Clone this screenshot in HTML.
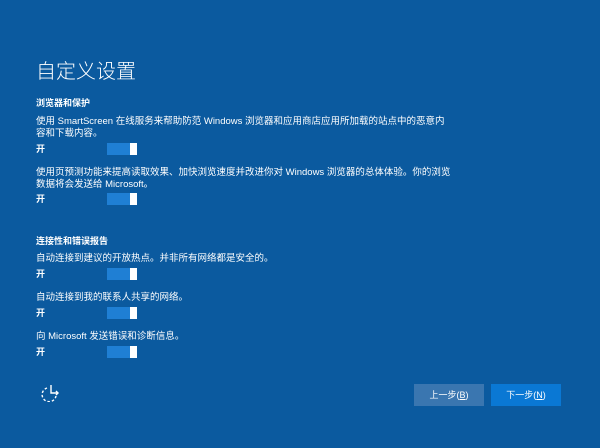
<!DOCTYPE html>
<html><head><meta charset="utf-8"><style>
body{margin:0;width:600px;height:448px;background:#0b5a9f;font-family:"Liberation Sans","Noto Sans CJK SC",sans-serif;color:#fff;position:relative;overflow:hidden}
.a{position:absolute;left:36px;font-size:9.5px;white-space:nowrap;line-height:12px}
.h{font-weight:bold;font-size:9px}
.t{position:absolute;left:107px;width:30px;height:12px;background:#1f7fd4}
.t:after{content:"";position:absolute;right:0;top:0;width:7px;height:12px;background:#fff}
.k{font-weight:bold;font-size:9px}
.b{position:absolute;top:384px;width:70px;height:22px;font-size:9px;text-align:center;line-height:22px}
</style></head><body>
<div class="a" style="top:59px;font-size:20px;line-height:26px;font-weight:300">自定义设置</div>
<div class="a h" style="top:97px">浏览器和保护</div>
<div class="a" style="top:116px">使用 SmartScreen 在线服务来帮助防范 Windows 浏览器和应用商店应用所加载的站点中的恶意内<br>容和下载内容。</div>
<div class="a k" style="top:143px">开</div><div class="t" style="top:143px"></div>
<div class="a" style="top:167px">使用页预测功能来提高读取效果、加快浏览速度并改进你对 Windows 浏览器的总体体验。你的浏览<br>数据将会发送给 Microsoft。</div>
<div class="a k" style="top:193px">开</div><div class="t" style="top:193px"></div>
<div class="a h" style="top:235px">连接性和错误报告</div>
<div class="a" style="top:253px">自动连接到建议的开放热点。并非所有网络都是安全的。</div>
<div class="a k" style="top:268px">开</div><div class="t" style="top:268px"></div>
<div class="a" style="top:292px">自动连接到我的联系人共享的网络。</div>
<div class="a k" style="top:307px">开</div><div class="t" style="top:307px"></div>
<div class="a" style="top:331px">向 Microsoft 发送错误和诊断信息。</div>
<div class="a k" style="top:346px">开</div><div class="t" style="top:346px"></div>
<svg style="position:absolute;left:41px;top:384px" width="22" height="18" viewBox="0 0 22 18" fill="none" stroke="#fff" stroke-width="1.4">
<path d="M6 4 A7 7 0 1 0 15 12" stroke-dasharray="2.5 2"/><path d="M10 1 V9 H17"/><path d="M15 7 L17 9 L15 11"/></svg>
<div class="b" style="left:414px;background:#3a76b0">上一步(<u>B</u>)</div>
<div class="b" style="left:491px;background:#0a78d4">下一步(<u>N</u>)</div>
</body></html>
